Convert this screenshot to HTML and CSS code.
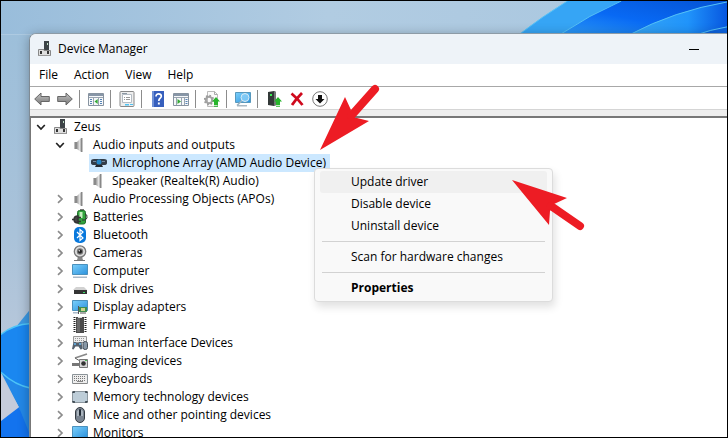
FILE: index.html
```html
<!DOCTYPE html>
<html lang="en">
<head>
    <meta charset="UTF-8">
    <title>Device Manager</title>
    <link rel="stylesheet" href="styles.css">
</head>
<body>
    <!-- Shared icons -->
    <svg class="icon-defs" aria-hidden="true">
        <symbol id="icon-open" viewBox="0 0 10 10"><path d="M1.2 3l3.8 4 3.8-4" fill="none" stroke="#222" stroke-width="1.7"/></symbol>
        <symbol id="icon-closed" viewBox="0 0 10 10"><path d="M3 1.2L7 5 3 8.8" fill="none" stroke="#8c8c8c" stroke-width="1.7"/></symbol>
        <symbol id="icon-device" viewBox="0 0 16 16">
            <path d="M7 0h5v9H7z" fill="#3d4347"/><path d="M10 2h1v2h-1z" fill="#bfe0c5"/>
            <path d="M1.500 8.500H7V9.500h6.500v5h-12z" fill="#dedede" stroke="#888"/>
            <path d="M3 10h2v3H3zM10 10h2v3h-2z" fill="#333"/><path d="M1 14h13v1H1z" fill="#999"/>
        </symbol>
        <symbol id="icon-speaker" viewBox="0 0 16 16">
            <path d="M2 5h3v7H2z" fill="#8a8a8a"/><path d="M2 5h1v7H2z" fill="#bbb"/>
            <path d="M5 5l4-4h1v14H9l-4-3z" fill="url(#metal)"/><path d="M9 1h1.500v14H9z" fill="#888"/>
        </symbol>
        <linearGradient id="metal"><stop offset="0" stop-color="#9a9a9a"/><stop offset=".5" stop-color="#e2e2e2"/><stop offset="1" stop-color="#8a8a8a"/></linearGradient>
        <linearGradient id="screen" x1="0" y1="0" x2="1" y2="1"><stop offset="0" stop-color="#7cd0fb"/><stop offset="1" stop-color="#2b91dc"/></linearGradient>
        <linearGradient id="arrow-fill" x1="0" y1="0" x2="0" y2="1"><stop offset="0" stop-color="#c4c4c4"/><stop offset="1" stop-color="#777"/></linearGradient>
        <symbol id="icon-up" viewBox="0 0 8 10"><path d="M4 0l4 4.500H6V7H2V4.500H0z" fill="#27b52c"/><path d="M2 7.500h4M2 9.300h4" stroke="#27b52c" stroke-width="1.100"/></symbol>
    </svg>

    <svg class="wallpaper" viewBox="0 0 728 438" preserveAspectRatio="none" aria-hidden="true">
        <defs>
            <linearGradient id="sky"><stop offset="0" stop-color="#99bddb"/><stop offset=".45" stop-color="#b1cce2"/><stop offset="1" stop-color="#a8c6df"/></linearGradient>
            <linearGradient id="left-sky" x1="0" y1="0" x2="0" y2="1"><stop offset="0" stop-color="#9dbfda"/><stop offset=".5" stop-color="#a9c2d9"/><stop offset="1" stop-color="#c3ccdc"/></linearGradient>
            <linearGradient id="petal"><stop offset="0" stop-color="#36a4f4"/><stop offset=".6" stop-color="#2094fb"/><stop offset="1" stop-color="#0757e0"/></linearGradient>
            <linearGradient id="petal-deep" x1="0" y1="1" x2="1" y2="0"><stop offset="0" stop-color="#2e9cf6"/><stop offset=".45" stop-color="#0869f4"/><stop offset="1" stop-color="#0553d4"/></linearGradient>
        </defs>
        <path d="M0 0h728v34H0z" fill="url(#sky)"/>
        <path d="M0 34h30v404H0z" fill="url(#left-sky)"/>
        <path d="M519 34Q542 16 568 0h160v34z" fill="#36a5f5"/>
        <path d="M560 34Q590 14 622 0h106v34z" fill="url(#petal-deep)"/>
        <path d="M630 34Q675 10 728 1v33z" fill="url(#petal)"/>
        <path d="M697 34q14-5 31-8v8z" fill="#0d63df"/>
        <path d="M519 34Q542 16 568 0M560 34Q590 14 622 0M630 34Q675 10 728 1M697 34q14-5 31-8" fill="none" stroke="#55c2f6"/>
        <path d="M30 309L17 325 18 408 30 438z" fill="#3b99e4"/>
        <path d="M0 335q12-10 30-11v65Q14 386 0 373z" fill="#1a87f0"/>
        <path d="M0 373q14 13 30 16v49H25l-7-30z" fill="#2388e8"/>
        <path d="M0 376l18 32L0 422z" fill="#c5cbdb"/>
        <path d="M0 422l18-14 12 30H0z" fill="#1373ee"/>
        <path d="M0 335q12-10 30-11M0 373q14 13 30 16" fill="none" stroke="#4cc4f8" stroke-width="1.500"/>
    </svg>

    <main class="window">
        <header class="title-bar">
            <svg class="icon"><use href="#icon-device"/></svg>
            <h1>Device Manager</h1>
            <button class="minimize" aria-label="Minimize"></button>
        </header>

        <nav class="menu-bar">
            <button>File</button>
            <button>Action</button>
            <button>View</button>
            <button>Help</button>
        </nav>

        <div class="toolbar">
            <button aria-label="Back"><svg class="icon" viewBox="0 0 16 16"><path d="M.7 8L7 2v3.500h8.300v5H7V14z" fill="url(#arrow-fill)" stroke="#666"/></svg></button>
            <button aria-label="Forward"><svg class="icon" viewBox="0 0 16 16"><path d="M15.300 8L9 2v3.500H.7v5H9V14z" fill="url(#arrow-fill)" stroke="#666"/></svg></button>
            <span class="separator"></span>
            <button aria-label="Show console tree"><svg class="icon" viewBox="0 0 16 16"><path d="M.5 2.500h15v12H.5z" fill="#f6f8fa" stroke="#8793a0"/><path d="M1 3h14v2H1z" fill="#8796a7"/><path d="M1 6.500h14M5.500 7v7M10.500 7v7" stroke="#9aa5b1"/><path d="M2 8.500h2M2 10.500h2M2 12.500h2M12 8.500h2M12 10.500h2M12 12.500h2" stroke="#5582b5"/><path d="M9.700 8v5L6.500 10.500z" fill="#35a936"/></svg></button>
            <span class="separator"></span>
            <button aria-label="Properties"><svg class="icon" viewBox="0 0 16 16"><rect x="1" y=".5" width="14" height="15" rx="1" fill="#eee" stroke="#888"/><path d="M3.500 3.500h9v8h-9z" fill="#fff" stroke="#b4bcc4"/><path d="M3 2.500h5" stroke="#8c97a2"/><path d="M5 6.500h1M7 6.500h4M5 8.500h1M7 8.500h4" stroke="#999"/><path d="M6 13h4v1.500H6zM11 13h3v1h-3z" fill="#4fc2f2"/></svg></button>
            <span class="separator"></span>
            <button aria-label="Help"><svg class="icon" viewBox="0 0 16 16"><path d="M2 0h12v16H2z" fill="#365fbd"/><path d="M2 0h2v16H2z" fill="#6f91d6"/><path d="M6 5.500c0-3.700 5.500-3.300 5.300-.2C11.200 7.300 8.800 7.300 8.800 10" fill="none" stroke="#fff" stroke-width="1.700"/><path d="M7.900 11.500h1.900v1.900H7.900z" fill="#fff"/></svg></button>
            <button aria-label="Show action pane"><svg class="icon" viewBox="0 0 16 16"><path d="M.5 2.500h15v12H.5z" fill="#f6f8fa" stroke="#8793a0"/><path d="M1 3h14v2H1z" fill="#8796a7"/><path d="M1 6.500h14M3.500 7v7M8.500 7v7M11.500 7v7" stroke="#9aa5b1"/><path d="M12.500 8.500h2M12.500 10.500h2M12.500 12.500h2" stroke="#5582b5"/><path d="M4.500 8v5l3.500-2.500z" fill="#35a936"/></svg></button>
            <span class="separator"></span>
            <button aria-label="Update driver"><svg class="icon" viewBox="0 0 16 16"><path d="M3.500.5h7l3 3v12h-10z" fill="#fafafa" stroke="#bbb"/><path d="M10.500.5v3h3" fill="none" stroke="#aaa"/><circle cx="5" cy="9" r="3.200" fill="none" stroke="#a2a2a2" stroke-width="2"/><circle cx="5" cy="9" r="4.500" fill="none" stroke="#999" stroke-width="1.500" stroke-dasharray="1.700 1.800"/><use href="#icon-up" x="8" y="6" width="8" height="10"/></svg></button>
            <span class="separator"></span>
            <button aria-label="Scan for hardware changes"><svg class="icon" viewBox="0 0 16 16"><path d="M.5 1.500h15v10H.5z" fill="url(#screen)" stroke="#5798bd"/><path d="M2 14h10v1.500H2z" fill="#aab7c1"/><path d="M7.500 9L2 14.500" stroke="#9cb3c0" stroke-width="1.600"/><circle cx="10" cy="6.500" r="4" fill="#8fd2f8" fill-opacity=".75" stroke="#dcecf4"/></svg></button>
            <span class="separator"></span>
            <button aria-label="Enable device"><svg class="icon" viewBox="0 0 16 16"><path d="M2 1l6-1 2 1v13l-2 1-6-1z" fill="#333938"/><path d="M8 0l2 1v13l-2 1z" fill="#737a78"/><path d="M4 3h2v2H4z" fill="#38ed55"/><use href="#icon-up" x="8" y="6" width="8" height="10"/></svg></button>
            <button aria-label="Uninstall device"><svg class="icon" viewBox="0 0 16 16"><path d="M2.500 2.500Q8 7 13.500 14M13 2Q7 8 3 14" fill="none" stroke="#cf0a1d" stroke-width="2.800"/></svg></button>
            <button aria-label="Disable device"><svg class="icon" viewBox="0 0 16 16"><circle cx="8" cy="8" r="7.300" fill="#fff" stroke="#777"/><path d="M6 4h4v4h2.500L8 12.500 3.500 8H6z" fill="#111"/></svg></button>
        </div>

        <section class="tree">
            <ul>
                <li>
                    <div class="row"><svg class="chevron"><use href="#icon-open"/></svg><span class="item"><svg class="icon"><use href="#icon-device"/></svg>Zeus</span></div>
                    <ul>
                        <li>
                            <div class="row"><svg class="chevron"><use href="#icon-open"/></svg><span class="item"><svg class="icon"><use href="#icon-speaker"/></svg>Audio inputs and outputs</span></div>
                            <ul>
                                <li class="row"><span class="chevron"></span><span class="item selected"><svg class="icon" viewBox="0 0 16 16"><path d="M0 6q0-2 3-2h10q3 0 3 2v2q0 2-3 2H3Q0 10 0 8z" fill="#333d49"/><path d="M5 10h6l1 2H4z" fill="#24292f"/><circle cx="8" cy="7" r="2.500" fill="#2687c7"/><path d="M2 6.500h3M11 6.500h3" stroke="#7389a0"/></svg>Microphone Array (AMD Audio Device)</span></li>
                                <li class="row"><span class="chevron"></span><span class="item"><svg class="icon"><use href="#icon-speaker"/></svg>Speaker (Realtek(R) Audio)</span></li>
                            </ul>
                        </li>
                        <li class="row"><svg class="chevron"><use href="#icon-closed"/></svg><span class="item"><svg class="icon"><use href="#icon-speaker"/></svg>Audio Processing Objects (APOs)</span></li>
                        <li class="row"><svg class="chevron"><use href="#icon-closed"/></svg><span class="item"><svg class="icon" viewBox="0 0 16 16"><path d="M8 0h4v2H8z" fill="#777"/><rect x="5.500" y="1.500" width="8" height="13.500" rx="2" fill="#32a33e" stroke="#226f2c"/><path d="M7.500 3h3v6h-3z" fill="#c6efc0"/><path d="M13 5q2.500 0 2 4-1 3-5 2" fill="none" stroke="#333"/><path d="M0 10.500h3M6 7v7q-4 0-4-3.500T6 7zM6 8.500h3M6 12.500h3" fill="#444" stroke="#333" stroke-width="1.500"/></svg>Batteries</span></li>
                        <li class="row"><svg class="chevron"><use href="#icon-closed"/></svg><span class="item"><svg class="icon" viewBox="0 0 16 16"><rect x="2" y="0" width="12" height="16" rx="5" fill="#0878dc"/><path d="M5 5l6 6-3 2.500v-11L11 5l-6 6" fill="none" stroke="#fff" stroke-width="1.200"/></svg>Bluetooth</span></li>
                        <li class="row"><svg class="chevron"><use href="#icon-closed"/></svg><span class="item"><svg class="icon" viewBox="0 0 16 16"><path d="M6 12h4l1 3H5z" fill="#888"/><path d="M2 15.500h11" stroke="#777"/><circle cx="8" cy="6.500" r="5.700" fill="#ddd" stroke="#777" stroke-width="1.300"/><circle cx="8" cy="6.500" r="3.200" fill="#777"/><circle cx="8" cy="6.500" r="2" fill="#222"/><circle cx="7.300" cy="5.700" r=".8" fill="#ddd"/></svg>Cameras</span></li>
                        <li class="row"><svg class="chevron"><use href="#icon-closed"/></svg><span class="item"><svg class="icon" viewBox="0 0 16 16"><path d="M.5 1.500h15v10H.5z" fill="url(#screen)" stroke="#4b91bd"/><path d="M1 13.500h14v1.500H1z" fill="#a9b9c8"/></svg>Computer</span></li>
                        <li class="row"><svg class="chevron"><use href="#icon-closed"/></svg><span class="item"><svg class="icon" viewBox="0 0 16 16"><path d="M4 6h8l3 3H1z" fill="#d2d2d2"/><path d="M2 9h13v4H2z" fill="#343434"/><path d="M11 11.500h2" stroke="#3bdf68"/></svg>Disk drives</span></li>
                        <li class="row"><svg class="chevron"><use href="#icon-closed"/></svg><span class="item"><svg class="icon" viewBox="0 0 16 16"><path d="M.5 1.500h15v10H.5z" fill="url(#screen)" stroke="#4b91bd"/><path d="M1 13h6v1.500H1z" fill="#a9b9c8"/><path d="M7 8h8v5H7z" fill="#408d4e"/><path d="M9 9h4v3H9z" fill="#cdd48b"/><path d="M6.500 7v8M8 14h6" stroke="#555"/></svg>Display adapters</span></li>
                        <li class="row"><svg class="chevron"><use href="#icon-closed"/></svg><span class="item"><svg class="icon" viewBox="0 0 16 16"><path d="M2.500 0v16M13.500 0v16" stroke="#222" stroke-width="2" stroke-dasharray="1 1"/><path d="M4 0h8v16H4z" fill="#4b4b4b"/><path d="M5 1h3v14H5z" fill="#696969"/><path d="M6 0h4v1H6z" fill="#ddd"/></svg>Firmware</span></li>
                        <li class="row"><svg class="chevron"><use href="#icon-closed"/></svg><span class="item"><svg class="icon" viewBox="0 0 16 16"><path d="M1.500 1.500h13v6h-13z" fill="#eee" stroke="#999"/><path d="M3 3.500h10M3 5.500h10" stroke="#999" stroke-dasharray="1 1"/><path d="M0 14l1.500-7h2l1 1h2l1-1h2l1 7-2 .5-2-3h-3l-2 3z" fill="#54616e"/><circle cx="3" cy="9" r="1" fill="#69baf0"/><circle cx="8" cy="9" r="1" fill="#69baf0"/><rect x="11" y="6.500" width="4.500" height="8" rx="2" fill="#8797a6" stroke="#424c56"/></svg>Human Interface Devices</span></li>
                        <li class="row"><svg class="chevron"><use href="#icon-closed"/></svg><span class="item"><svg class="icon" viewBox="0 0 16 16"><path d="M3 5L15 1" stroke="#888" stroke-width="1.800"/><path d="M3 5l5 3" stroke="#666"/><path d="M0 10h8v3H0z" fill="#777"/><path d="M7.500 6.500h8v8h-8z" fill="#d8d8d8" stroke="#777"/><circle cx="11.500" cy="10.500" r="2.300" fill="#333"/><path d="M13 7h2v1h-2z" fill="#4bb757"/></svg>Imaging devices</span></li>
                        <li class="row"><svg class="chevron"><use href="#icon-closed"/></svg><span class="item"><svg class="icon" viewBox="0 0 16 16"><path d="M.5 3.500h15v9H.5z" fill="#eee" stroke="#8c9499"/><path d="M2 5.500h12M2 7.500h12M2 9.500h12" stroke="#777" stroke-dasharray="1 1"/><path d="M1 12h14v1H1z" fill="#888"/><path d="M5 10.500h6" stroke="#888"/></svg>Keyboards</span></li>
                        <li class="row"><svg class="chevron"><use href="#icon-closed"/></svg><span class="item"><svg class="icon" viewBox="0 0 16 16"><rect x=".5" y="2.500" width="15" height="11" rx="1.500" fill="#bdcdd8" stroke="#8c979f"/><path d="M1 4V3h2M13 3h2v1M1 12v1h2M13 13h2v-1" fill="none" stroke="#354049" stroke-width="1.300"/></svg>Memory technology devices</span></li>
                        <li class="row"><svg class="chevron"><use href="#icon-closed"/></svg><span class="item"><svg class="icon" viewBox="0 0 16 16"><rect x="3.500" y=".5" width="9" height="15" rx="4.500" fill="#7a8490" stroke="#343b42"/><path d="M5 4q3-3 6 0v5H5z" fill="#aab4bd"/><rect x="7" y="2" width="2" height="7" rx="1" fill="#222b35"/></svg>Mice and other pointing devices</span></li>
                        <li class="row"><svg class="chevron"><use href="#icon-closed"/></svg><span class="item"><svg class="icon" viewBox="0 0 16 16"><path d="M.5 1.500h15v11H.5z" fill="url(#screen)" stroke="#4b91bd"/><path d="M5 14h6v1H5z" fill="#999"/></svg>Monitors</span></li>
                    </ul>
                </li>
            </ul>
        </section>
    </main>

    <div class="context-menu">
        <button class="active">Update driver</button>
        <button>Disable device</button>
        <button>Uninstall device</button>
        <hr>
        <button>Scan for hardware changes</button>
        <hr>
        <button class="default">Properties</button>
    </div>

    <!-- Pointers over the window -->
    <svg class="pointer pointer-device" viewBox="0 0 62 68" aria-hidden="true"><path d="M1 66L26 13l6 13-2 8 8 0 12 3z" fill="#ed1c24"/><path d="M32 32L56 5" stroke="#ed1c24" stroke-width="8" stroke-linecap="round"/></svg>
    <svg class="pointer pointer-update" viewBox="0 0 76 54" aria-hidden="true"><path d="M1 1l55 18-13 6-4 7-1 14z" fill="#ed1c24"/><path d="M40 27l29 20" stroke="#ed1c24" stroke-width="8" stroke-linecap="round"/></svg>
</body>
</html>
```
FILE: styles.css
```css
* {
    box-sizing: border-box;
}
body {
    position: relative;
    margin: 0;
    height: 100vh;
    overflow: hidden;
    display: flex;
    border: 1px solid #000;
    color: #000;
    font-family: "Open Sans", "Noto Sans", sans-serif;
    font-size: 12px;
    line-height: 18px;
}
button {
    margin: 0;
    padding: 0;
    border: none;
    background: none;
    color: inherit;
    font: inherit;
}
ul {
    margin: 0;
    padding: 0;
    list-style: none;
}
.icon-defs {
    position: absolute;
    width: 0;
    height: 0;
}
.icon {
    display: block;
    flex: none;
    width: 16px;
    height: 16px;
}
.wallpaper {
    position: absolute;
    inset: 0;
    width: 100%;
    height: 100%;
}

/* Window */
.window {
    position: relative;
    flex: 1;
    min-width: 0;
    display: flex;
    flex-direction: column;
    margin: 32px 0 0 28px;
    border-top: 1px solid #8d9ba6;
    border-left: 1px solid #7f8b95;
    border-top-left-radius: 7px;
    background-color: #eee;
    box-shadow: 0 2px 12px rgba(0, 0, 0, 0.3);
    overflow: hidden;
}
.title-bar {
    flex: none;
    display: flex;
    align-items: center;
    gap: 5px;
    height: 30px;
    padding: 0 28px 0 7px;
    background-color: #eef3f8;
}
.title-bar h1 {
    flex: 1;
    margin: 0;
    font-size: 12px;
    font-weight: 400;
}
.minimize {
    width: 10px;
    height: 10px;
    background: linear-gradient(#000, #000) center / 10px 1px no-repeat;
}
.menu-bar {
    flex: none;
    display: flex;
    height: 23px;
    padding-left: 1px;
    border-bottom: 1px solid #a8a8a8;
    background-color: #fff;
}
.menu-bar button {
    padding: 0 8px;
}
.toolbar {
    flex: none;
    display: flex;
    align-items: center;
    height: 23px;
    padding-top: 2px;
    border-bottom: 1px solid #d5d5d5;
    background-color: #fff;
}
.toolbar button {
    display: flex;
    justify-content: center;
    width: 23px;
}
.separator {
    width: 1px;
    height: 18px;
    margin: 0 4px 0 3px;
    background-color: #8c8c8c;
}

/* Device tree */
.tree {
    flex: 1;
    min-height: 0;
    overflow: hidden;
    margin-top: 6px;
    border-top: 2px solid #777;
    border-left: 1px solid #777;
    background-color: #fff;
}
.tree ul ul {
    padding-left: 19px;
}
.row {
    display: flex;
    align-items: center;
    height: 18px;
    padding-left: 5px;
}
.chevron {
    flex: none;
    width: 10px;
    height: 10px;
}
.item {
    display: flex;
    align-items: center;
    gap: 5px;
    margin-left: 5px;
    padding: 0 4px 0 2px;
    white-space: nowrap;
}
.item.selected {
    background-color: #cce8ff;
}

/* Context menu */
.context-menu {
    position: absolute;
    top: 167px;
    left: 313px;
    width: 239px;
    padding: 2px 5px;
    border: 1px solid #dcdcdc;
    border-radius: 4px;
    background-color: #f9f9f9;
    box-shadow: 2px 5px 8px rgba(0, 0, 0, 0.12);
}
.context-menu button {
    display: block;
    width: 100%;
    height: 22px;
    padding-left: 31px;
    border-radius: 3px;
    text-align: left;
}
.context-menu .active {
    background-color: #f0f0f0;
}
.context-menu .default {
    font-weight: 700;
}
.context-menu hr {
    height: 1px;
    margin: 4px 2px;
    border: none;
    background-color: #d2d2d2;
}

/* Red pointers */
.pointer {
    position: absolute;
}
.pointer-device {
    top: 83px;
    left: 318px;
    width: 62px;
    height: 68px;
}
.pointer-update {
    top: 178px;
    left: 510px;
    width: 76px;
    height: 54px;
}
```
